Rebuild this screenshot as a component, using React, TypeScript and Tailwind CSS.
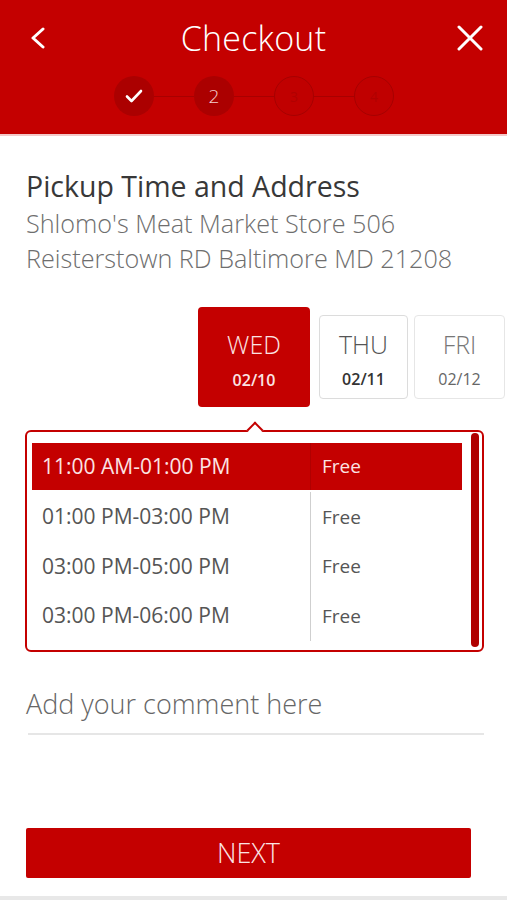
import React from "react";

function Step({ children, filled }: { children?: React.ReactNode; filled?: boolean }) {
  return filled ? (
    <div className="w-[40px] h-[40px] rounded-full bg-[#ab0000] flex items-center justify-center text-white text-[19px] shrink-0">
      {children}
    </div>
  ) : (
    <div className="w-[40px] h-[40px] rounded-full bg-[#c00000] border-[1.5px] border-[#a60000] flex items-center justify-center text-[#b00000] text-[14px] shrink-0">
      {children}
    </div>
  );
}

function Line() {
  return <div className="w-[40px] h-px bg-[#a80000]" />;
}

const slots = ["11:00 AM-01:00 PM", "01:00 PM-03:00 PM", "03:00 PM-05:00 PM", "03:00 PM-06:00 PM"];

export default function App() {
  return (
    <div className="w-[507px] h-[900px] bg-white flex flex-col font-['Open_Sans',sans-serif] overflow-hidden">
      <header className="bg-[#c40000] h-[136px] border-b-2 border-[#f3c9c9] shrink-0">
        <div className="h-[76px] flex items-center justify-between pl-[30px] pr-[24px]">
          <svg width="16" height="22" viewBox="0 0 16 22" fill="none">
            <path d="M13 2 L3 11 L13 20" stroke="white" strokeWidth="3" strokeLinecap="round" strokeLinejoin="round" />
          </svg>
          <div className="text-white text-[34px] font-light tracking-[0.2px] ml-[4px]">Checkout</div>
          <svg width="26" height="26" viewBox="0 0 26 26" fill="none">
            <path d="M2 2 L24 24 M24 2 L2 24" stroke="white" strokeWidth="3" strokeLinecap="round" />
          </svg>
        </div>
        <div className="flex items-center pl-[114px]">
          <Step filled>
            <svg width="18" height="14" viewBox="0 0 18 14" fill="none">
              <path d="M2 7.5 L6.5 12 L16 2" stroke="white" strokeWidth="2.6" strokeLinecap="round" strokeLinejoin="round" />
            </svg>
          </Step>
          <Line />
          <Step filled>
            <span className="text-[#f4d0d0] font-light">2</span>
          </Step>
          <Line />
          <Step>3</Step>
          <Line />
          <Step>4</Step>
        </div>
      </header>

      <div className="pl-[26px] pr-[23px] flex flex-col">
        <h1 className="mt-[32px] text-[28.5px] leading-[36px] text-[#383838]">Pickup Time and Address</h1>
        <p className="mt-[2px] text-[25.2px] leading-[35px] text-[#6e6e6e] font-light">
          Shlomo's Meat Market Store 506
          <br />
          Reisterstown RD Baltimore MD 21208
        </p>

        <div className="flex items-start mt-[31px] mr-[-23px] justify-end">
          <div className="ml-[-4px] w-[112px] h-[100px] rounded-[4px] bg-[#c40000] flex flex-col items-center pt-[22px]">
            <div className="text-[25px] font-light leading-[30px] text-[#fbe4e4]">WED</div>
            <div className="text-[16px] font-semibold leading-[22px] mt-[10px] text-[#fbe4e4]">02/10</div>
          </div>
          <div className="mt-[8px] ml-[9px] w-[89px] h-[84px] rounded-[4px] border border-[#dcdcdc] bg-white flex flex-col items-center pt-[13px]">
            <div className="text-[25px] font-light leading-[30px] text-[#555]">THU</div>
            <div className="text-[16px] font-semibold leading-[22px] mt-[9px] text-[#333]">02/11</div>
          </div>
          <div className="mt-[8px] ml-[6px] mr-[2px] w-[91px] h-[84px] rounded-[4px] border border-[#e6e6e6] bg-white flex flex-col items-center pt-[13px]">
            <div className="text-[25px] font-light leading-[30px] text-[#777]">FRI</div>
            <div className="text-[16px] font-normal leading-[22px] mt-[9px] text-[#666]">02/12</div>
          </div>
        </div>

        <div className="relative mt-[23px] ml-[-1px] w-[459px] h-[222px] rounded-[6px] border-2 border-[#c40000] flex">
          <div className="absolute left-[222px] top-[-8px] w-[12px] h-[12px] bg-white border-l-2 border-t-2 border-[#c40000] rotate-45" />
          <div className="flex flex-col pt-[11px] pl-[5px] w-[435px]">
            {slots.map((s, i) => (
              <div
                key={s}
                className={
                  "flex items-center " +
                  (i === 0 ? "bg-[#c40000] text-[#fbe4e4] h-[47px] mb-[2px]" : "text-[#555] h-[49.5px]")
                }
              >
                <div
                  className={
                    "w-[279px] h-full flex items-center pl-[10px] border-r text-[21px] " +
                    (i === 0 ? "border-[#b00000]" : "border-[#cfcfcf]")
                  }
                >
                  {s}
                </div>
                <div className="pl-[11px] text-[19px]">Free</div>
              </div>
            ))}
          </div>
          <div className="ml-[9px] mt-px w-[8px] h-[214px] rounded-full bg-[#b00000]" />
        </div>

        <div className="mt-[34px] text-[27px] leading-[36px] font-light text-[#666]">Add your comment here</div>
        <div className="mt-[11px] ml-[2px] h-[2px] w-[456px] bg-[#e6e6e6]" />

        <button className="mt-[93px] w-[445px] h-[50px] rounded-[2px] bg-[#c40000] text-[27px] font-light text-[#fbe4e4] flex items-center justify-center">
          NEXT
        </button>
      </div>
      <div className="mt-auto h-[4px] bg-[#e8e8e8]" />
    </div>
  );
}
